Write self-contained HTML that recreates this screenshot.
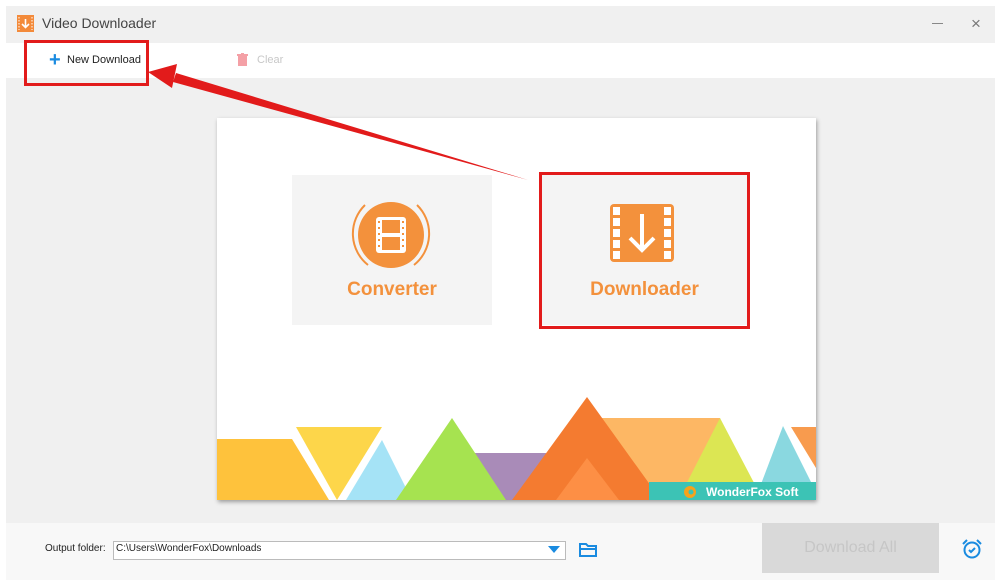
<!DOCTYPE html>
<html><head><style>
body{margin:0;width:1000px;height:580px;background:#fff;position:relative;overflow:hidden;font-family:"Liberation Sans",sans-serif}
.a{position:absolute}
</style></head><body>
<div class="a" style="left:6px;top:6px;width:989px;height:37px;background:#f0f0f0"></div>
<div class="a" style="left:17px;top:15px;width:17px;height:17px;background:#f38a3a"></div>
<svg class="a" style="left:17px;top:15px" width="17" height="17"><path d="M8.5 4v8M5 9l3.5 3.5L12 9" stroke="#fff" stroke-width="1.6" fill="none"/><path d="M2 2v13M15 2v13" stroke="#fff" stroke-width="1" stroke-dasharray="1.5 1.5"/></svg>
<div class="a" style="left:42px;top:15px;font-size:14px;color:#444">Video Downloader</div>
<div class="a" style="left:932px;top:23px;width:11px;height:1px;background:#888"></div>
<div class="a" style="left:971px;top:14px;font-size:17px;color:#777">×</div>
<div class="a" style="left:6px;top:43px;width:989px;height:35px;background:#fff"></div>
<div class="a" style="left:49px;top:50px;font-size:20px;color:#1a8be0;font-weight:bold;line-height:20px">+</div>
<div class="a" style="left:67px;top:54px;font-size:11px;color:#222">New Download</div>
<svg class="a" style="left:237px;top:53px" width="11" height="13"><rect x="1" y="3" width="9" height="10" fill="#f4a0a6"/><rect x="0" y="1" width="11" height="2" fill="#f4a0a6"/><rect x="4" y="0" width="3" height="2" fill="#f4a0a6"/></svg>
<div class="a" style="left:257px;top:54px;font-size:11px;color:#c8c8c8">Clear</div>
<div class="a" style="left:6px;top:78px;width:989px;height:445px;background:#f0f0f0"></div>
<div class="a" style="left:24px;top:40px;width:119px;height:40px;border:3px solid #e21b1b"></div>
<div class="a" style="left:217px;top:118px;width:599px;height:382px;background:#fff;box-shadow:1px 2px 4px rgba(0,0,0,.35);overflow:hidden">
<div class="a" style="left:75px;top:57px;width:200px;height:150px;background:#f4f4f4"></div>
<div class="a" style="left:325px;top:57px;width:205px;height:150px;background:#f4f4f4"></div>
<svg class="a" style="left:134px;top:77px" width="80" height="80"><circle cx="40" cy="40" r="33" fill="#f3913c"/><path d="M14 10A40 40 0 0 0 17 70M66 10A40 40 0 0 1 63 70" stroke="#f3913c" stroke-width="2" fill="none"/><rect x="25" y="22" width="30" height="36" rx="3" fill="#fff"/><rect x="31" y="25" width="18" height="13" fill="#f3913c"/><rect x="31" y="42" width="18" height="13" fill="#f3913c"/><g fill="#f3913c"><rect x="27" y="26" width="2" height="2"/><rect x="27" y="32" width="2" height="2"/><rect x="27" y="38" width="2" height="2"/><rect x="27" y="44" width="2" height="2"/><rect x="27" y="50" width="2" height="2"/><rect x="51" y="26" width="2" height="2"/><rect x="51" y="32" width="2" height="2"/><rect x="51" y="38" width="2" height="2"/><rect x="51" y="44" width="2" height="2"/><rect x="51" y="50" width="2" height="2"/></g></svg>
<div class="a" style="left:75px;top:161px;width:200px;text-align:center;font-size:19px;font-weight:bold;color:#f3913c">Converter</div>
<svg class="a" style="left:393px;top:86px" width="64" height="58"><rect width="64" height="58" rx="4" fill="#f3913c"/><g fill="#fff"><rect x="3" y="3" width="7" height="8"/><rect x="3" y="14" width="7" height="8"/><rect x="3" y="25" width="7" height="8"/><rect x="3" y="36" width="7" height="8"/><rect x="3" y="47" width="7" height="8"/><rect x="54" y="3" width="7" height="8"/><rect x="54" y="14" width="7" height="8"/><rect x="54" y="25" width="7" height="8"/><rect x="54" y="36" width="7" height="8"/><rect x="54" y="47" width="7" height="8"/></g><path d="M32 10v36M20 34l12 12 12-12" stroke="#fff" stroke-width="4" fill="none"/></svg>
<div class="a" style="left:325px;top:161px;width:205px;text-align:center;font-size:19px;font-weight:bold;color:#f3913c">Downloader</div>
<svg class="a" style="left:0;top:0" width="599" height="382">
<g transform="translate(-217,-118)">
<polygon points="217,439 292,439 329,500 217,500" fill="#fec23c"/>
<polygon points="296,427 382,427 337,500" fill="#fdd64a"/>
<polygon points="382,440 412,500 346,500" fill="#a5e3f6"/>
<polygon points="475,453 546,453 546,500 475,500" fill="#a98bb8"/>
<polygon points="452,418 506,500 396,500" fill="#a6e350"/>
<polygon points="601,418 720,418 740,500 600,500" fill="#fdb764"/>
<polygon points="587,397 661,500 512,500" fill="#f47b30"/>
<polygon points="587,458 619,500 556,500" fill="#fd8f45"/>
<polygon points="720,418 763,500 678,500" fill="#dce653"/>
<polygon points="783,426 820,500 755,500" fill="#8ad8e0"/>
<polygon points="791,427 816,427 816,468" fill="#f89b4e"/>
<rect x="649" y="482" width="167" height="18" fill="#3cc3b5"/>
<circle cx="690" cy="492" r="6" fill="#f7a21b"/><circle cx="691" cy="492" r="2.5" fill="#3cc3b5"/>
<text x="706" y="496" font-size="12" font-weight="bold" fill="#fff" font-family="Liberation Sans">WonderFox Soft</text>
</g></svg>
</div>
<div class="a" style="left:539px;top:172px;width:205px;height:151px;border:3px solid #e21b1b"></div>
<svg class="a" style="left:0;top:0" width="1000" height="580">
<polygon points="528,180 176,73 173,82" fill="#e21b1b"/>
<polygon points="148,72 177,64 172,88" fill="#e21b1b"/>
</svg>
<div class="a" style="left:6px;top:523px;width:989px;height:57px;background:#f8f8f8"></div>
<div class="a" style="left:45px;top:543px;font-size:10px;color:#222">Output folder:</div>
<div class="a" style="left:113px;top:541px;width:451px;height:17px;background:#fff;border:1px solid #bbb"></div>
<div class="a" style="left:116px;top:543px;font-size:10px;color:#222">C:\Users\WonderFox\Downloads</div>
<svg class="a" style="left:548px;top:546px" width="12" height="8"><polygon points="0,0 12,0 6,7" fill="#1a8be0"/></svg>
<svg class="a" style="left:579px;top:542px" width="19" height="15"><path d="M1 2h6l2 2h8v10H1z" fill="none" stroke="#1a8be0" stroke-width="2"/><path d="M1 7h16" stroke="#1a8be0" stroke-width="2"/></svg>
<div class="a" style="left:762px;top:523px;width:177px;height:50px;background:#d9d9d9;color:#c6c6c6;font-size:16px;text-align:center;line-height:50px">Download All</div>
<svg class="a" style="left:961px;top:538px" width="22" height="22"><circle cx="11" cy="12" r="7.5" fill="none" stroke="#1a8be0" stroke-width="2"/><path d="M2 6l4-4M20 6l-4-4M8 12l2 2 4-4" stroke="#1a8be0" stroke-width="2" fill="none"/></svg>
</body></html>
